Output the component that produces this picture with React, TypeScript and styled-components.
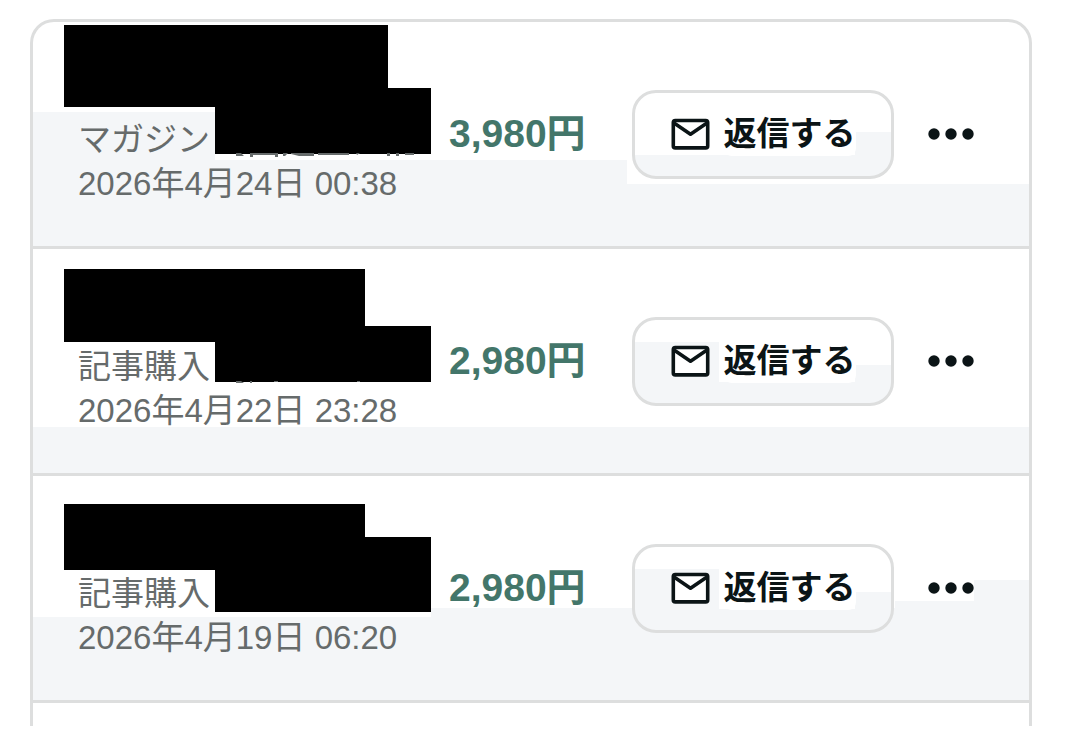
import React from 'react';
import styled, { createGlobalStyle } from 'styled-components';

const TINT = '#f4f6f8';
const LINE = '#dddede';

const GlobalStyle = createGlobalStyle`
  *, *::before, *::after { box-sizing: border-box; }
  body {
    margin: 0;
    background: #fff;
    color: #0b1416;
    font-family: 'Liberation Sans', 'Noto Sans CJK JP', sans-serif;
  }
`;

const Page = styled.main`
  padding: 19px 48px 6px 30px;
`;

const Card = styled.ul`
  list-style: none;
  margin: 0;
  padding: 0;
  border: 3px solid ${LINE};
  border-bottom: 0;
  border-radius: 24px 24px 0 0;
`;

type Zone = { side: 'left' | 'right'; width: string; top: number };

const shade = (zones: Zone[]) =>
  zones
    .map(z => `linear-gradient(${TINT}, ${TINT}) ${z.side} 0 top ${z.top}px / ${z.width} 100% no-repeat`)
    .join(', ');

const Row = styled.li<{ $zones: Zone[] }>`
  position: relative;
  display: flex;
  align-items: center;
  height: 227px;
  padding: 0 55px 0 45px;
  border-bottom: 3px solid ${LINE};
  background: ${p => shade(p.$zones)};
`;

const NextRow = styled.li`
  height: 23px;
`;

const Info = styled.div`
  flex: 1;
  align-self: flex-start;
  min-width: 0;
  padding-top: 96px;
  font-size: 33px;
  line-height: 44px;
  color: #666b6b;
  white-space: nowrap;
`;

const Line = styled.div``;

const Price = styled.strong`
  flex: 0 0 183px;
  font-size: 39px;
  line-height: 44px;
  font-weight: 700;
  color: #43766a;
`;

const ReplyButton = styled.button<{ $zones: Zone[] }>`
  display: flex;
  align-items: center;
  justify-content: center;
  gap: 14px;
  flex: 0 0 262px;
  height: 89px;
  padding: 0;
  border: 3px solid ${LINE};
  border-radius: 24px;
  background: ${p => shade(p.$zones)}, #fff;
  color: inherit;
  font: inherit;
  font-size: 33px;
  line-height: 44px;
  font-weight: 700;
`;

const Label = styled.span`
  background: #fff;
  border-radius: 8px;
`;

const MoreButton = styled.button`
  flex: 0 0 46px;
  height: 44px;
  margin-left: 34px;
  padding: 0;
  border: 0;
  background: none;
  color: inherit;
  svg { display: block; }
`;

type Box = { left: number; top: number; width: number; height: number };

/* Black bars lying over the private parts of a purchase. */
const Mask = styled.span<{ $box: Box }>`
  position: absolute;
  left: ${p => p.$box.left}px;
  top: ${p => p.$box.top}px;
  width: ${p => p.$box.width}px;
  height: ${p => p.$box.height}px;
  background: #000;
`;

const Remnant = styled.svg<{ $top: number }>`
  position: absolute;
  left: 182px;
  top: ${p => p.$top}px;
`;

const MailIcon = () => (
  <svg width="39" height="32" viewBox="0 0 39 32" fill="#fff" stroke="currentColor" strokeWidth="3.6" strokeLinejoin="round" aria-hidden="true">
    <rect x="2.3" y="2.5" width="34.4" height="27.4" rx="2" />
    <path d="M3 5L19.5 16.2L36 5" fill="none" />
  </svg>
);

const DotsIcon = () => (
  <svg width="46" height="44" viewBox="0 0 46 44" fill="currentColor" aria-hidden="true">
    <circle cx="6" cy="22" r="5.7" />
    <circle cx="23" cy="22" r="5.7" />
    <circle cx="40" cy="22" r="5.7" />
  </svg>
);

type Purchase = {
  kind: string;
  date: string;
  dateTime: string;
  price: string;
  masks: Box[];
  remnant?: { top: number; d: string };
  zones: Zone[];
  buttonZones: Zone[];
};

const purchases: Purchase[] = [
  {
    kind: 'マガジン',
    date: '2026年4月24日 00:38',
    dateTime: '2026-04-24T00:38',
    price: '3,980円',
    masks: [
      { left: 31, top: 3, width: 324, height: 82 },
      { left: 182, top: 66, width: 216, height: 66 },
    ],
    remnant: {
      top: 131,
      d: 'M21 0H26L29 3H21ZM35 0H38V4H35ZM38 0H60V2H38ZM60 0H63V4H60ZM68 0H73L70 3H68ZM76 0H99V3H84L76 1ZM103 0H134V2H103ZM141 0H145L142 2ZM172 0H175V3H172ZM181 0H184V3H181ZM190 0H199V2H190Z',
    },
    zones: [
      { side: 'left', width: '182px', top: 90 },
      { side: 'left', width: '594px', top: 138 },
      { side: 'left', width: '100%', top: 162 },
    ],
    buttonZones: [
      { side: 'right', width: '36px', top: 39 },
      { side: 'left', width: '100%', top: 62 },
    ],
  },
  {
    kind: '記事購入',
    date: '2026年4月22日 23:28',
    dateTime: '2026-04-22T23:28',
    price: '2,980円',
    masks: [
      { left: 31, top: 20, width: 301, height: 73 },
      { left: 182, top: 77, width: 216, height: 56 },
    ],
    remnant: { top: 132, d: 'M21 0H26L29 2H21ZM35 0H37V2H35ZM59 0H63V1H59ZM142 0H145V1H142Z' },
    zones: [{ side: 'left', width: '100%', top: 178 }],
    buttonZones: [
      { side: 'left', width: '84px', top: 22 },
      { side: 'right', width: '36px', top: 45 },
      { side: 'left', width: '100%', top: 62 },
    ],
  },
  {
    kind: '記事購入',
    date: '2026年4月19日 06:20',
    dateTime: '2026-04-19T06:20',
    price: '2,980円',
    masks: [
      { left: 31, top: 28, width: 301, height: 66 },
      { left: 182, top: 61, width: 216, height: 75 },
    ],
    zones: [
      { side: 'right', width: '55px', top: 104 },
      { side: 'right', width: '134px', top: 125 },
      { side: 'right', width: '598px', top: 132 },
      { side: 'left', width: '100%', top: 141 },
    ],
    buttonZones: [
      { side: 'left', width: '84px', top: 22 },
      { side: 'right', width: '36px', top: 45 },
      { side: 'left', width: '100%', top: 62 },
    ],
  },
];

const PurchaseRow = ({ item }: { item: Purchase }) => (
  <Row $zones={item.zones}>
    <Info>
      <Line>{item.kind}</Line>
      <Line as="time" dateTime={item.dateTime}>{item.date}</Line>
    </Info>
    <Price>{item.price}</Price>
    <ReplyButton type="button" $zones={item.buttonZones}>
      <MailIcon />
      <Label>返信する</Label>
    </ReplyButton>
    <MoreButton type="button" aria-label="メニュー">
      <DotsIcon />
    </MoreButton>
    {item.masks.map((box, i) => (
      <Mask key={i} $box={box} />
    ))}
    {item.remnant && (
      <Remnant $top={item.remnant.top} width="216" height="4" aria-hidden="true">
        <path d={item.remnant.d} fill="#666b6b" />
      </Remnant>
    )}
  </Row>
);

export default function App() {
  return (
    <>
      <GlobalStyle />
      <Page>
        <Card>
          {purchases.map(item => (
            <PurchaseRow key={item.date} item={item} />
          ))}
          <NextRow />
        </Card>
      </Page>
    </>
  );
}
